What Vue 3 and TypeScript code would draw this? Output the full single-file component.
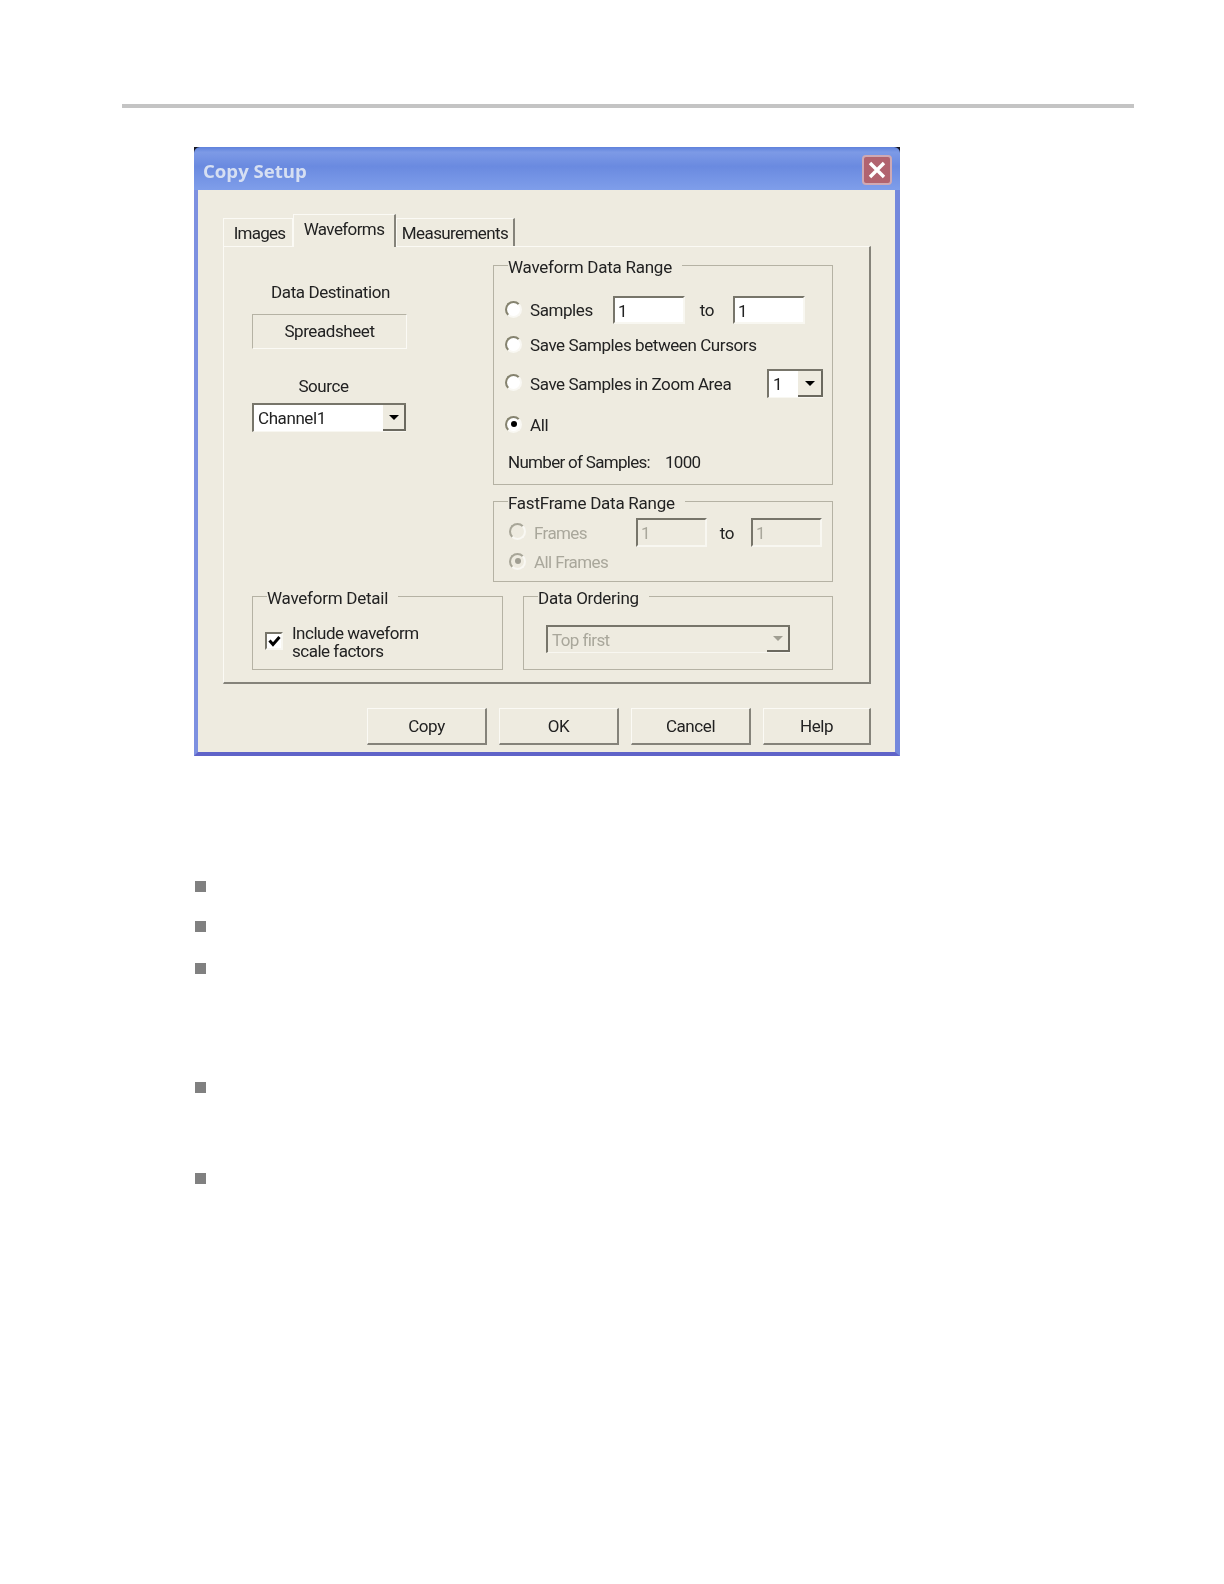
<script setup lang="ts">
const tabs = [
  { label: 'Images', active: false },
  { label: 'Waveforms', active: true },
  { label: 'Measurements', active: false },
]
const buttons = ['Copy', 'OK', 'Cancel', 'Help']
// the page's bullets have no text, only uneven spacing
const bulletGaps = [0, 29, 31, 108, 80]
</script>

<template>
  <div class="page">
    <div class="rule"></div>

    <div class="dialog">
      <div class="titlebar">
        <span class="title">Copy Setup</span>
        <span class="close">
          <svg width="20" height="20" viewBox="0 0 20 20">
            <path d="M3 3 17 17M17 3 3 17" stroke="#fff" stroke-width="3.4" />
          </svg>
        </span>
      </div>

      <div class="client">
        <div class="tabs">
          <div v-for="tab in tabs" :key="tab.label" class="tab" :class="{ active: tab.active }">
            {{ tab.label }}
          </div>
        </div>

        <div class="panel">
          <div class="top">
            <div class="left">
              <div class="label dest-label">Data Destination</div>
              <div class="dest-box">Spreadsheet</div>
              <div class="label source-label">Source</div>
              <div class="combo source-combo">
                <span class="combo-text">Channel1</span>
                <span class="drop"><i class="arrow"></i></span>
              </div>
            </div>

            <div class="right">
              <fieldset class="group range">
                <legend>Waveform Data Range</legend>
                <div class="row row-samples">
                  <span class="radio"></span>
                  <span class="opt opt-samples">Samples</span>
                  <span class="field">1</span>
                  <span class="to">to</span>
                  <span class="field">1</span>
                </div>
                <div class="row row-cursors">
                  <span class="radio"></span>
                  <span class="opt">Save Samples between Cursors</span>
                </div>
                <div class="row row-zoom">
                  <span class="radio"></span>
                  <span class="opt opt-zoom">Save Samples in Zoom Area</span>
                  <div class="combo zoom-combo">
                    <span class="combo-text">1</span>
                    <span class="drop"><i class="arrow"></i></span>
                  </div>
                </div>
                <div class="row row-all">
                  <span class="radio checked"></span>
                  <span class="opt">All</span>
                </div>
                <div class="count">
                  <span>Number of Samples:</span>
                  <span>1000</span>
                </div>
              </fieldset>

              <fieldset class="group fastframe">
                <legend>FastFrame Data Range</legend>
                <div class="row row-frames">
                  <span class="radio disabled"></span>
                  <span class="opt opt-frames off">Frames</span>
                  <span class="field off-field">1</span>
                  <span class="to to-frames">to</span>
                  <span class="field off-field">1</span>
                </div>
                <div class="row row-allframes">
                  <span class="radio disabled checked"></span>
                  <span class="opt off">All Frames</span>
                </div>
              </fieldset>
            </div>
          </div>

          <div class="bottom">
            <fieldset class="group detail">
              <legend>Waveform Detail</legend>
              <div class="check-row">
                <span class="check">
                  <svg width="13" height="12" viewBox="0 0 13 12">
                    <path d="M1.5 5.5 5 9.5 11.5 2" fill="none" stroke="#000" stroke-width="3" />
                  </svg>
                </span>
                <span class="check-text">Include waveform<br />scale factors</span>
              </div>
            </fieldset>

            <fieldset class="group ordering">
              <legend>Data Ordering</legend>
              <div class="combo order-combo">
                <span class="combo-text off">Top first</span>
                <span class="drop"><i class="arrow arrow-off"></i></span>
              </div>
            </fieldset>
          </div>
        </div>

        <div class="buttons">
          <button v-for="b in buttons" :key="b" class="btn" :class="{ narrow: b === 'Help' }">
            {{ b }}
          </button>
        </div>
      </div>
    </div>

    <ul class="bullets">
      <li v-for="(gap, i) in bulletGaps" :key="i" :style="{ marginTop: gap + 'px' }"></li>
    </ul>
  </div>
</template>

<style scoped>
.page {
  width: 1224px;
  height: 1584px;
  background: #fff;
  padding-top: 104px;
  box-sizing: border-box;
  overflow: hidden;
}

.rule {
  width: 1012px;
  height: 4px;
  margin-left: 122px;
  background: #c4c4c4;
}

.dialog {
  width: 706px;
  height: 609px;
  margin: 39px 0 0 194px;
  background: #15151f;
  display: flex;
  flex-direction: column;
  font-family: Roboto, 'Liberation Sans', sans-serif;
  font-size: 17px;
  letter-spacing: -0.42px;
  color: #222;
  filter: blur(0.55px);
}

.titlebar {
  height: 43px;
  flex: none;
  box-sizing: border-box;
  display: flex;
  align-items: center;
  justify-content: space-between;
  padding: 3px 8px 0 9px;
  border-radius: 6px 6px 0 0;
  background: linear-gradient(#5f82dc 0%, #7d9ae6 12%, #6a8ae0 45%, #7f9eea 100%);
}

.title {
  font-family: 'Open Sans', sans-serif;
  font-weight: 700;
  font-size: 18.6px;
  letter-spacing: 0;
  color: #d6dff2;
}

.close {
  width: 30px;
  height: 30px;
  box-sizing: border-box;
  border: 2px solid #cfa9b3;
  border-radius: 4px;
  background: #b1636f;
  display: flex;
  align-items: center;
  justify-content: center;
}

.client {
  flex: 1;
  background: #eeebe0;
  border-style: solid;
  border-width: 0 5px 4px 4px;
  border-color: #7488dc #7488dc #5f63c8 #7d90e0;
  padding: 24px 0 0 25px;
  display: flex;
  flex-direction: column;
}

.tabs {
  display: flex;
  height: 32px;
  flex: none;
  align-items: flex-end;
  letter-spacing: -0.6px;
}

.tab {
  height: 28px;
  line-height: 28px;
  text-align: center;
  border-top: 1px solid #fbfaf5;
  border-left: 1px solid #fbfaf5;
  border-right: 2px solid #85837a;
  box-sizing: border-box;
}

.tab:nth-child(1) {
  width: 70px;
  padding-left: 3px;
  letter-spacing: -0.75px;
  border-right-color: #fbfaf5;
  border-right-width: 1px;
}

.tab:nth-child(2) {
  width: 103px;
}

.tab:nth-child(3) {
  width: 119px;
}

.tab.active {
  height: 33px;
  margin-bottom: -1px;
  background: #eeebe0;
  position: relative;
  z-index: 1;
}

.panel {
  width: 648px;
  height: 438px;
  flex: none;
  box-sizing: border-box;
  border-style: solid;
  border-width: 1px 2px 2px 1px;
  border-color: #fbfaf5 #85837a #85837a #fbfaf5;
  padding: 7px 0 0 28px;
  display: flex;
  flex-direction: column;
}

.top {
  display: flex;
  height: 331px;
  flex: none;
}

.left {
  width: 241px;
  flex: none;
}

.label {
  text-align: center;
  line-height: 20px;
}

.dest-label {
  width: 157px;
  margin-top: 28px;
}

.dest-box {
  width: 155px;
  height: 35px;
  margin-top: 12px;
  box-sizing: border-box;
  border: 1px solid #fbfaf5;
  border-top-color: #b5b2a4;
  border-left-color: #b5b2a4;
  text-align: center;
  line-height: 33px;
}

.source-label {
  width: 143px;
  margin-top: 27px;
}

.source-combo {
  width: 154px;
  height: 29px;
  margin-top: 7px;
}

.combo {
  box-sizing: border-box;
  border-style: solid;
  border-width: 2px 0 1px 2px;
  border-color: #77756a #f8f7f1 #f8f7f1 #77756a;
  background: #fff;
  display: flex;
  align-items: center;
  justify-content: space-between;
}

.combo-text {
  padding-left: 4px;
}

.drop {
  width: 23px;
  height: 100%;
  box-sizing: border-box;
  background: #eeebe0;
  border-right: 2px solid #6b695f;
  border-bottom: 2px solid #6b695f;
  display: flex;
  align-items: center;
  justify-content: center;
}

.arrow {
  width: 0;
  height: 0;
  border: 5px solid transparent;
  border-top: 5px solid #000;
  border-bottom: 0;
}

.arrow-off {
  border-top-color: #a09e92;
}

.group {
  margin: 0;
  padding: 0;
  box-sizing: border-box;
  border: 1px solid #b5b2a4;
  min-width: 0;
}

/* legend sits a little below the border it interrupts */
.group legend {
  margin-left: 14px;
  padding: 0 10px 0 0;
  line-height: 22px;
  letter-spacing: -0.25px;
  position: relative;
  top: 2px;
}

.range {
  width: 340px;
  height: 231px;
}

.fastframe {
  width: 340px;
  height: 92px;
  margin-top: 5px;
}

.row {
  display: flex;
  align-items: center;
  padding-left: 11px;
}

.radio {
  width: 17px;
  height: 17px;
  flex: none;
  box-sizing: border-box;
  border: 2px solid;
  border-color: #85836f #f9f8f3 #f9f8f3 #85836f;
  border-radius: 50%;
  background: #fff;
  margin-top: -2px;
  display: flex;
  align-items: center;
  justify-content: center;
}

.radio.checked::after {
  content: '';
  width: 6px;
  height: 6px;
  border-radius: 50%;
  background: #000;
}

.radio.disabled {
  background: #eeebe0;
  border-color: #a8a698 #f9f8f3 #f9f8f3 #a8a698;
}

.radio.disabled.checked::after {
  background: #a09e92;
}

.opt {
  margin-left: 8px;
  line-height: 20px;
  white-space: nowrap;
}

.off {
  color: #a9a79b;
  letter-spacing: -0.6px;
}

.opt-samples {
  width: 83px;
}

.field {
  width: 72px;
  height: 28px;
  box-sizing: border-box;
  border: 2px solid;
  border-color: #77756a #f8f7f1 #f8f7f1 #77756a;
  background: #fff;
  padding-left: 3px;
  line-height: 26px;
}

.off-field {
  width: 71px;
  height: 29px;
  background: #eeebe0;
  color: #a9a79b;
}

.to {
  width: 48px;
  box-sizing: border-box;
  padding-right: 4px;
  text-align: center;
}

.row-samples {
  margin-top: 20px;
}

.row-cursors {
  margin-top: 11px;
}

.row-zoom {
  margin-top: 14px;
}

.opt-zoom {
  width: 237px;
}

.zoom-combo {
  width: 56px;
  height: 29px;
}

.zoom-combo .drop {
  width: 25px;
}

.row-all {
  margin-top: 17px;
}

.count {
  display: flex;
  gap: 15px;
  margin: 17px 0 0 14px;
  line-height: 20px;
  letter-spacing: -0.7px;
}

.row-frames {
  margin-top: 6px;
  padding-left: 15px;
}

.opt-frames {
  width: 102px;
}

.to-frames {
  width: 44px;
}

.row-allframes {
  margin-top: 5px;
  padding-left: 15px;
}

.bottom {
  display: flex;
  gap: 20px;
}

.detail {
  width: 251px;
  height: 85px;
}

.ordering {
  width: 310px;
  height: 85px;
}

.check-row {
  display: flex;
  align-items: center;
  padding: 17px 0 0 12px;
}

.check {
  width: 18px;
  height: 18px;
  margin-top: -3px;
  box-sizing: border-box;
  border: 2px solid;
  border-color: #77756a #f8f7f1 #f8f7f1 #77756a;
  background: #fff;
  display: flex;
  align-items: center;
  justify-content: center;
}

.check-text {
  margin-left: 9px;
  line-height: 18px;
  letter-spacing: -0.5px;
}

.order-combo {
  width: 244px;
  height: 28px;
  margin: 18px 0 0 22px;
  background: #eeebe0;
}

.buttons {
  display: flex;
  gap: 12px;
  margin: 24px 0 0 144px;
}

.btn {
  width: 120px;
  height: 37px;
  padding: 0;
  font: inherit;
  letter-spacing: inherit;
  color: inherit;
  background: #eeebe0;
  border-style: solid;
  border-width: 1px 2px 2px 1px;
  border-color: #fbfaf5 #85837a #85837a #fbfaf5;
}

.btn.narrow {
  width: 108px;
}

.bullets {
  list-style: none;
  margin: 125px 0 0 195px;
  padding: 0;
}

.bullets li {
  width: 11px;
  height: 11px;
  background: #808080;
}
</style>
